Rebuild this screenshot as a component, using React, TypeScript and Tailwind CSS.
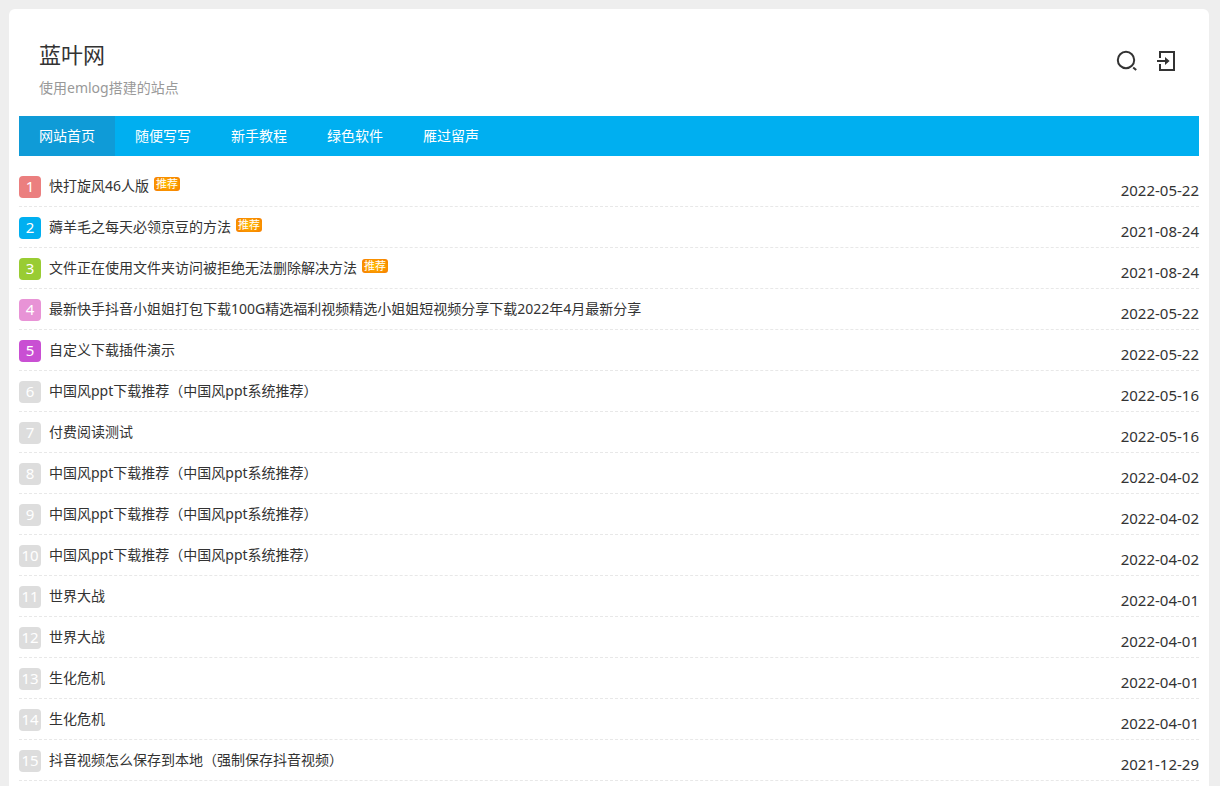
type Post = { title: string; date: string; hot?: boolean };

const posts: Post[] = [
  { title: '快打旋风46人版', date: '2022-05-22', hot: true },
  { title: '薅羊毛之每天必领京豆的方法', date: '2021-08-24', hot: true },
  { title: '文件正在使用文件夹访问被拒绝无法删除解决方法', date: '2021-08-24', hot: true },
  { title: '最新快手抖音小姐姐打包下载100G精选福利视频精选小姐姐短视频分享下载2022年4月最新分享', date: '2022-05-22' },
  { title: '自定义下载插件演示', date: '2022-05-22' },
  { title: '中国风ppt下载推荐（中国风ppt系统推荐）', date: '2022-05-16' },
  { title: '付费阅读测试', date: '2022-05-16' },
  { title: '中国风ppt下载推荐（中国风ppt系统推荐）', date: '2022-04-02' },
  { title: '中国风ppt下载推荐（中国风ppt系统推荐）', date: '2022-04-02' },
  { title: '中国风ppt下载推荐（中国风ppt系统推荐）', date: '2022-04-02' },
  { title: '世界大战', date: '2022-04-01' },
  { title: '世界大战', date: '2022-04-01' },
  { title: '生化危机', date: '2022-04-01' },
  { title: '生化危机', date: '2022-04-01' },
  { title: '抖音视频怎么保存到本地（强制保存抖音视频）', date: '2021-12-29' },
];

const rankColors = ['bg-[#eb7f7f]', 'bg-[#00aff0]', 'bg-[#99cc33]', 'bg-[#e893d6]', 'bg-[#c94fd3]'];

const navItems = ['网站首页', '随便写写', '新手教程', '绿色软件', '雁过留声'];

function SearchIcon() {
  return (
    <svg width="22" height="22" viewBox="0 0 22 22" fill="none" stroke="#333" strokeWidth="2" aria-hidden="true">
      <circle cx="10" cy="10" r="8.2" />
      <path d="M17.2 17.4l3 2.6" />
    </svg>
  );
}

function LoginIcon() {
  return (
    <svg width="22" height="22" viewBox="0 0 22 22" fill="none" stroke="#333" strokeWidth="2" aria-hidden="true">
      <path d="M4 8V2h14v18H4v-6" />
      <path d="M1 11h10" />
      <path d="M9 7l4.6 4L9 15z" fill="#333" stroke="none" />
    </svg>
  );
}

function Header() {
  return (
    <header className="flex items-start justify-between pt-[29px] pr-[21px] pb-3.5 pl-5">
      <div>
        <h1 className="text-[22px] leading-8 font-normal text-[#333]">
          <a href="#">蓝叶网</a>
        </h1>
        <p className="mt-1 text-sm leading-7 text-[#999]">使用emlog搭建的站点</p>
      </div>
      <div className="flex gap-[18px] pt-3">
        <button type="button" aria-label="搜索">
          <SearchIcon />
        </button>
        <a href="#login" aria-label="登录">
          <LoginIcon />
        </a>
      </div>
    </header>
  );
}

function Nav() {
  return (
    <nav className="flex bg-[#00aff0] text-sm leading-10 text-white">
      {navItems.map((item, i) => (
        <a key={item} href="#" className={i === 0 ? 'bg-[#0f9bd7] px-5' : 'px-5'}>
          {item}
        </a>
      ))}
    </nav>
  );
}

function PostRow({ post, rank }: { post: Post; rank: number }) {
  const color = rankColors[rank - 1] ?? 'bg-[#ddd]';
  return (
    <li className="flex items-start border-b border-dashed border-[#e8e8e8]">
      <span className={`mt-2.5 mr-2 h-[22px] w-[22px] shrink-0 rounded text-center text-[15px] leading-5 text-white ${color}`}>
        {rank}
      </span>
      <a href="#" className="text-sm leading-10">
        {post.title}
      </a>
      {post.hot && (
        <span className="mt-[11px] ml-[5px] h-3.5 shrink-0 rounded-[3px] bg-radial from-[#ffbe00] to-[#f57a00] px-0.5 text-[11px] leading-3.5 text-white">
          推荐
        </span>
      )}
      <time className="mt-2 ml-auto shrink-0 text-[15px] leading-8">{post.date}</time>
    </li>
  );
}

export default function App() {
  return (
    <div className="flex min-h-screen flex-col bg-[#eee] pt-[9px] pr-[11px] pl-[9px] font-['Noto_Sans','Noto_Sans_CJK_SC',sans-serif] text-[#333]">
      <main className="flex-1 rounded-t-md bg-white px-2.5">
        <Header />
        <Nav />
        <ol className="pt-2.5">
          {posts.map((post, i) => (
            <PostRow key={i} post={post} rank={i + 1} />
          ))}
        </ol>
      </main>
    </div>
  );
}
